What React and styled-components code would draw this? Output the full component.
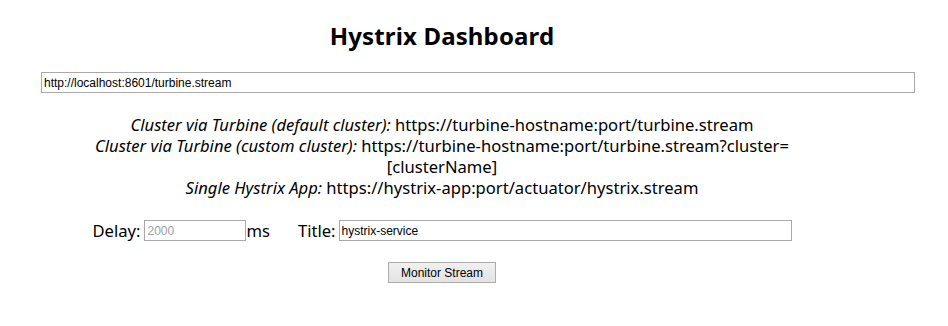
import React, { useState } from 'react';
import styled, { createGlobalStyle } from 'styled-components';

const Global = createGlobalStyle`
  html, body {
    margin: 0;
    padding: 0;
    background: #fff;
  }
  body {
    font-family: "Noto Sans", "Open Sans", "DejaVu Sans", sans-serif;
    color: #000;
  }
`;

const Page = styled.div`
  width: 802px;
  margin-left: 41px;
  padding-top: 20px;
  display: flex;
  flex-direction: column;
  align-items: center;
  text-align: center;
`;

const Title = styled.h2`
  margin: 0;
  font-size: 24px;
  font-weight: 700;
  line-height: 32px;
  letter-spacing: 0.15px;
`;

const StreamRow = styled.div`
  align-self: flex-start;
  margin-top: 18px;
`;

const Field = styled.input`
  box-sizing: border-box;
  height: 21px;
  width: ${p => p.$w}px;
  padding: 1px 2px;
  border: 1px solid #a9a9a9;
  font-family: "Liberation Sans", Arial, sans-serif;
  font-size: 12px;
  color: #000;
  vertical-align: middle;
  outline: none;
  &::placeholder {
    color: #a0a0a0;
  }
`;

const Hints = styled.div`
  margin-top: 21px;
  font-size: 16.6px;
  line-height: 21px;
`;

const Label = styled.i`
  font-style: italic;
`;

const Options = styled.div`
  margin-top: 22px;
  font-size: 16.6px;
  line-height: 21px;
  display: flex;
  align-items: center;
`;

const Pair = styled.span`
  display: inline-flex;
  align-items: center;
  margin-right: ${p => p.$gap || 0}px;
`;

const Text = styled.span`
  margin-right: ${p => p.$after || 0}px;
`;

const Button = styled.button`
  margin-top: 21px;
  width: 108px;
  height: 21px;
  padding: 0;
  font-family: "Liberation Sans", Arial, sans-serif;
  font-size: 12px;
  color: #000;
  border: 1px solid #adadad;
  border-radius: 0;
  background: linear-gradient(#f0f0f0, #e3e3e3);
`;

const App = () => {
  const [stream, setStream] = useState('http://localhost:8601/turbine.stream');
  const [title, setTitle] = useState('hystrix-service');

  return (
    <>
      <Global />
      <Page>
        <Title>Hystrix Dashboard</Title>
        <StreamRow>
          <Field $w={874} value={stream} onChange={e => setStream(e.target.value)} />
        </StreamRow>
        <Hints>
          <Label>Cluster via Turbine (default cluster):</Label> https://turbine-hostname:port/turbine.stream
          <br />
          <Label>Cluster via Turbine (custom cluster):</Label> https://turbine-hostname:port/turbine.stream?cluster=<wbr />[clusterName]
          <br />
          <Label>Single Hystrix App:</Label> https://hystrix-app:port/actuator/hystrix.stream
        </Hints>
        <Options>
          <Pair $gap={28}>
            <Text $after={4}>Delay:</Text>
            <Field $w={102} placeholder="2000" />
            <Text>ms</Text>
          </Pair>
          <Pair>
            <Text $after={3}>Title:</Text>
            <Field $w={453} value={title} onChange={e => setTitle(e.target.value)} />
          </Pair>
        </Options>
        <Button>Monitor Stream</Button>
      </Page>
    </>
  );
};

export default App;
